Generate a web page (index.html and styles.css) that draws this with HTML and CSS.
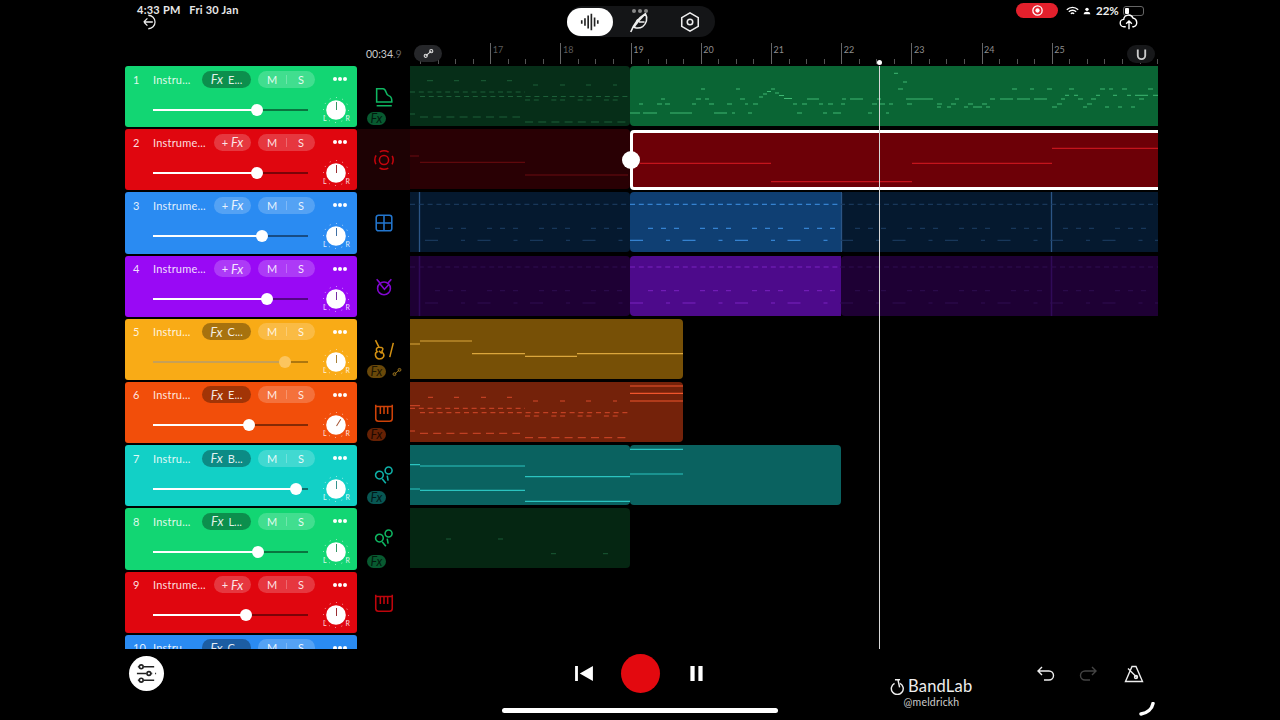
FILE: index.html
```html
<!DOCTYPE html>
<html lang="en">
<head>
<meta charset="utf-8">
<title>BandLab Studio</title>
<link rel="stylesheet" href="styles.css">
</head>
<body>
<svg class="defs" width="0" height="0" aria-hidden="true">
  <defs>
    <symbol id="knob" viewBox="0 0 32 32">
      <circle class="knob-dots" cx="16" cy="16" r="12.5"/>
      <circle class="knob-face" cx="16" cy="16" r="9.8"/>
      <text class="knob-lr" x="3" y="27">L</text>
      <text class="knob-lr" x="25.5" y="27">R</text>
    </symbol>
    <symbol id="maracas" viewBox="0 0 24 24">
      <circle cx="7" cy="11" r="4.2"/><circle cx="17" cy="6" r="3.8"/>
      <path d="M10 15l4 5M15.500 11.500l1 5.500"/>
    </symbol>
    <symbol id="keys" viewBox="0 0 24 24">
      <path d="M3 3v15q0 3 3 3h12q3 0 3-3V3M3 5h18M8 5v8M12 5v8M16 5v8"/>
    </symbol>
  </defs>
</svg>
<div class="app">
  <header class="top">
    <div class="top-left">
      <div class="clock">4:33 PM&nbsp;&nbsp; Fri 30 Jan</div>
      <svg class="back" viewBox="0 0 20 20"><path d="M7 2.500a7.500 7.500 0 1 1 0 15M2 10h10M2 10l4-4M2 10l4 4"/></svg>
    </div>
    <div class="seg">
      <div class="seg-on"><svg viewBox="0 0 24 24"><path d="M3 10v4M6.500 8v8M10 5v14M13.500 3v18M17 7v10M20.500 10v4"/></svg></div>
      <div class="seg-item">
        <span class="seg-dots"></span>
        <svg viewBox="0 0 24 24"><path d="M3 23C6 15 11 8 19 3c3 5 1 11-3 14-3 2-6 2-9 1M19 3C13 9 9 14 6 18M11 9c-2 2-3 5-3 8M18 12l-6 0"/></svg>
      </div>
      <div class="seg-item"><svg viewBox="0 0 24 24"><path d="M12 2l9 5.200v9.600L12 22l-9-5.200V7.200z"/><circle cx="12" cy="12" r="3"/></svg></div>
    </div>
    <div class="status">
      <span class="rec"><svg viewBox="0 0 14 14"><circle class="rec-ring" cx="7" cy="7" r="5"/><circle class="rec-dot" cx="7" cy="7" r="2.300"/></svg></span>
      <svg class="wifi" viewBox="0 0 16 12"><path d="M1 4.500c4-4 10-4 14 0M3.500 7c2.500-2.500 6.500-2.500 9 0M6 9.500c1-1 3-1 4 0"/></svg>
      <svg class="person" viewBox="0 0 12 12"><circle cx="6" cy="3.500" r="2.500"/><path d="M1 11c0-3 2-4 5-4s5 1 5 4z"/></svg>
      <span class="pct">22%</span>
      <span class="battery"><span class="battery-fill"></span></span>
      <svg class="cloud" viewBox="0 0 24 22"><path d="M8 18H6a4.500 4.500 0 0 1-.500-9 6 6 0 0 1 11.500-1.500A5.500 5.500 0 0 1 18 18h-2M12 21V11M8.500 14.500L12 11l3.500 3.500"/></svg>
    </div>
  </header>

  <div class="rulerbar">
    <div class="time">00:34<span class="time-dim">.9</span></div>
    <div class="ruler">
      <span class="bar bar-dim">17</span><span class="bar bar-dim">18</span><span class="bar">19</span><span class="bar">20</span><span class="bar">21</span><span class="bar">22</span><span class="bar">23</span><span class="bar">24</span><span class="bar">25</span>
      <span class="snap"><svg viewBox="0 0 14 14"><circle cx="3.500" cy="10" r="2"/><circle cx="10.500" cy="4" r="2"/><path d="M3.500 10L10.500 4"/></svg></span>
      <span class="magnet"><svg viewBox="0 0 14 14"><path d="M3 1.500V8a4 4 0 0 0 8 0V1.500"/></svg></span>
    </div>
  </div>

  <main class="workspace">
    <section class="mixer">
      <div class="strip c-green"><div class="strip-head"><span class="num">1</span><span class="name">Instru...</span><span class="fx"><i>Fx</i> E...</span><span class="ms"><b>M</b><b>S</b></span><span class="dots"></span></div><div class="strip-ctl"><div class="slider"><div class="fill" style="width:67%"></div></div><svg class="knob"><use href="#knob"/></svg></div></div>
      <div class="strip c-red"><div class="strip-head"><span class="num">2</span><span class="name">Instrume...</span><span class="fx fx-add">+ <i>Fx</i></span><span class="ms"><b>M</b><b>S</b></span><span class="dots"></span></div><div class="strip-ctl"><div class="slider"><div class="fill" style="width:67%"></div></div><svg class="knob"><use href="#knob"/></svg></div></div>
      <div class="strip c-blue"><div class="strip-head"><span class="num">3</span><span class="name">Instrume...</span><span class="fx fx-add">+ <i>Fx</i></span><span class="ms"><b>M</b><b>S</b></span><span class="dots"></span></div><div class="strip-ctl"><div class="slider"><div class="fill" style="width:70%"></div></div><svg class="knob"><use href="#knob"/></svg></div></div>
      <div class="strip c-purple"><div class="strip-head"><span class="num">4</span><span class="name">Instrume...</span><span class="fx fx-add">+ <i>Fx</i></span><span class="ms"><b>M</b><b>S</b></span><span class="dots"></span></div><div class="strip-ctl"><div class="slider"><div class="fill" style="width:73.5%"></div></div><svg class="knob"><use href="#knob"/></svg></div></div>
      <div class="strip c-yellow strip-muted"><div class="strip-head"><span class="num">5</span><span class="name">Instru...</span><span class="fx"><i>Fx</i> C...</span><span class="ms"><b>M</b><b>S</b></span><span class="dots"></span></div><div class="strip-ctl"><div class="slider"><div class="fill" style="width:85%"></div></div><svg class="knob"><use href="#knob"/></svg></div></div>
      <div class="strip c-orange strip-turned"><div class="strip-head"><span class="num">6</span><span class="name">Instru...</span><span class="fx"><i>Fx</i> E...</span><span class="ms"><b>M</b><b>S</b></span><span class="dots"></span></div><div class="strip-ctl"><div class="slider"><div class="fill" style="width:62%"></div></div><svg class="knob"><use href="#knob"/></svg></div></div>
      <div class="strip c-teal"><div class="strip-head"><span class="num">7</span><span class="name">Instru...</span><span class="fx"><i>Fx</i> B...</span><span class="ms"><b>M</b><b>S</b></span><span class="dots"></span></div><div class="strip-ctl"><div class="slider"><div class="fill" style="width:92%"></div></div><svg class="knob"><use href="#knob"/></svg></div></div>
      <div class="strip c-green"><div class="strip-head"><span class="num">8</span><span class="name">Instru...</span><span class="fx"><i>Fx</i> L...</span><span class="ms"><b>M</b><b>S</b></span><span class="dots"></span></div><div class="strip-ctl"><div class="slider"><div class="fill" style="width:67.7%"></div></div><svg class="knob"><use href="#knob"/></svg></div></div>
      <div class="strip c-red"><div class="strip-head"><span class="num">9</span><span class="name">Instrume...</span><span class="fx fx-add">+ <i>Fx</i></span><span class="ms"><b>M</b><b>S</b></span><span class="dots"></span></div><div class="strip-ctl"><div class="slider"><div class="fill" style="width:60%"></div></div><svg class="knob"><use href="#knob"/></svg></div></div>
      <div class="strip c-blue"><div class="strip-head"><span class="num">10</span><span class="name">Instru...</span><span class="fx"><i>Fx</i> C...</span><span class="ms"><b>M</b><b>S</b></span><span class="dots"></span></div></div>
    </section>

    <section class="instruments">
      <div class="inst c-green"><svg class="inst-icon" viewBox="0 0 24 24"><path d="M4 3h7c4 0 2 6 6 7.500 3 1 3.500 3 3.500 5.500v1.500H4zM4 21.500h16.500"/></svg><span class="badge"><i>Fx</i></span></div>
      <div class="inst c-red inst-selected"><svg class="inst-icon" viewBox="0 0 24 24"><circle cx="12" cy="12" r="5"/><circle cx="12" cy="12" r="10" stroke-dasharray="10 5.700" stroke-dashoffset="5"/></svg></div>
      <div class="inst c-blue"><svg class="inst-icon" viewBox="0 0 24 24"><rect x="3.500" y="3.500" width="17" height="17" rx="2.500"/><path d="M12 3.500v17M3.500 12h17"/></svg></div>
      <div class="inst c-purple"><svg class="inst-icon" viewBox="0 0 24 24"><circle cx="12" cy="13.500" r="7"/><path d="M4 3.500l3.500 4M20 3.500l-3.500 4M7.500 8.500l5 6 4.500-5"/></svg></div>
      <div class="inst c-yellow"><svg class="inst-icon inst-wide" viewBox="0 0 28 24"><path d="M5 1l4 8c-3 0-4 3-2 5-3 1-3 7 2 8 5 0 7-4 4-7-1-1-1-2 0-3 1-2 0-3-4-3M9 13l3 3M25 4l-4 16"/></svg><span class="badge"><i>Fx</i></span><svg class="scissor" viewBox="0 0 14 14"><circle cx="3.500" cy="10" r="2"/><circle cx="10.500" cy="4" r="2"/><path d="M3.500 10L10.500 4"/></svg></div>
      <div class="inst c-orange"><svg class="inst-icon"><use href="#keys"/></svg><span class="badge"><i>Fx</i></span></div>
      <div class="inst c-teal"><svg class="inst-icon"><use href="#maracas"/></svg><span class="badge"><i>Fx</i></span></div>
      <div class="inst c-green"><svg class="inst-icon"><use href="#maracas"/></svg><span class="badge"><i>Fx</i></span></div>
      <div class="inst c-red"><svg class="inst-icon"><use href="#keys"/></svg></div>
    </section>

    <section class="timeline">
      <div class="lane">
        <div class="clip clip-220 g-dark"></div><div class="clip clip-fill g-bright"></div>
        <svg class="notes" viewBox="0 0 748 61">
          <g class="n-green-dim">
            <path d="M17 14.700h6M44 14.700h5M71 14.700h5M97 14.700h5M123 19h5M150 19h5M176 19h5M203 19h4M0 48h5"/>
            <path class="d-a" d="M0 26h115"/><path class="d-a" d="M10 30.500h208"/><path class="d-b" d="M115 34h103"/>
            <path class="d-c" d="M10 51h100"/><path class="d-c" d="M115 56h102"/>
          </g>
          <g class="n-green">
            <path d="M220 47h10M233 47h14M260 47h22M304 47h13M322 47h3M338 47h4M387 47h5M413 47h4M423 47h8M458 47h4M476 47h3"/>
            <path d="M229 38h4M247 38h5M255 38h5M282 38h4M299 38h5M317 38h5M335 38h3M343 38h5M383 38h4M392 38h5M409 38h4M418 38h5M431 38h4M462 38h5M470 38h5M479 38h4"/>
            <path d="M251 33h4M286 33h5M295 33h4M330 33h5M397 33h12M432 33h4M440 33h13M467 33h4M496 33h27M545 33h4M580 33h5M590 33h13M607 33h13M624 33h13M651 33h4M668 33h5M681 33h5M729 33h5"/>
            <path d="M291 23h4M326 23h4M361 23h4M488 23h5M602 23h5M620 23h4M637 23h5M659 23h5M690 23h5M699 23h4M712 23h5M738 23h5"/>
            <path d="M349 31h4M353 28h4M357 25.500h4M365 27h4M369 29.500h5M374 32.500h8M484 7.300h4M493 16h4"/>
            <path d="M655 29.300h4M664 29.300h4M686 29.300h4M703 29.300h4M717 29.300h4M725 29.300h13M743 29.300h5"/>
            <path d="M497 38h5M541 38h5M558 38h5M572 38h5M647 38h5M677 38h5M527 38h5"/>
            <path d="M527 41h4M537 41h4M554 41h4M563 41h9M576 41h4M642 41h5M673 41h4M695 41h4M708 41h4M721 41h4"/>
          </g>
        </svg>
      </div>

      <div class="lane">
        <div class="clip clip-220 r-dark"></div><div class="clip clip-fill r-bright clip-selected"><span class="handle"></span></div>
        <svg class="notes" viewBox="0 0 748 61">
          <g class="n-red-dim"><path d="M0 27h9M10 33.300h105M115 46h103"/></g>
          <g class="n-red"><path d="M230 34.300h131M361 52.700h141M502 34.300h140M642 19.300h106"/></g>
        </svg>
      </div>

      <div class="lane">
        <div class="clip clip-220 b-dark"></div><div class="clip clip-211 b-bright"></div><div class="clip clip-fill b-dark clip-flat"></div>
        <svg class="notes" viewBox="0 0 748 61">
          <path class="n-blue-line" d="M9.500 0v60M431.500 0v60M641.500 0v60"/>
          <g class="n-blue-dim"><path class="d-a" d="M0 12.300h220M430 12.300h318"/><path class="d-g" d="M25 36.300h195M445 36.300h303"/><path class="d-h" d="M15 48.300h205M430 48.300h318"/></g>
          <g class="n-blue"><path class="d-a" d="M220 12.300h208"/><path class="d-g" d="M238 36.300h193"/><path class="d-h" d="M220 48.300h200"/></g>
        </svg>
      </div>

      <div class="lane">
        <div class="clip clip-220 p-dark"></div><div class="clip clip-211 p-bright"></div><div class="clip clip-fill p-dark clip-flat"></div>
        <svg class="notes" viewBox="0 0 748 61">
          <path class="n-purple-line" d="M9.500 0v60M641.500 0v60"/>
          <g class="n-purple-dim"><path class="d-a" d="M0 11h220M430 11h318"/><path class="d-g" d="M25 34.700h195M445 34.700h303"/><path class="d-h" d="M15 47h205M430 47h318"/></g>
          <g class="n-purple"><path class="d-a" d="M220 11h208"/><path class="d-g" d="M238 34.700h193"/><path class="d-h" d="M220 47h200"/></g>
        </svg>
      </div>

      <div class="lane">
        <div class="clip clip-273 y-bright"></div>
        <svg class="notes" viewBox="0 0 748 61"><g class="n-yellow"><path d="M0 25h10M10 22h52M62 34.700h53M115 37.300h52M167 34.700h106"/></g></svg>
      </div>

      <div class="lane">
        <div class="clip clip-273 o-bright"></div>
        <svg class="notes" viewBox="0 0 748 61">
          <g class="n-orange">
            <path d="M18 15.300h5M44 15.300h5M71 15.300h5M97 15.300h5M123 19h5M150 19h5M176 19h5M203 19h4M0 23.700h10M0 49h5"/>
            <path class="d-a" d="M0 26.300h115"/><path class="d-a" d="M10 30.700h208"/><path class="d-b" d="M115 34h103"/>
            <path class="d-c" d="M10 51.300h100"/><path class="d-c" d="M115 55.700h102"/>
          </g>
          <g class="n-orange-hi"><path d="M220 4h53M220 11.300h53M220 19h53"/></g>
        </svg>
      </div>

      <div class="lane">
        <div class="clip clip-220 t-bright"></div><div class="clip clip-211 t-next"></div>
        <svg class="notes" viewBox="0 0 748 61"><g class="n-teal"><path d="M0 19.700h10M10 21h105M115 31.700h105M0 44h10M10 45.300h105M115 56.300h105M220 4.300h53M220 29h53"/></g></svg>
      </div>

      <div class="lane">
        <div class="clip clip-220 g-deep"></div>
        <svg class="notes" viewBox="0 0 748 61"><g class="n-green-faint"><path d="M36 31h5M88 31h5M141 45.700h5M193 45.700h5"/></g></svg>
      </div>

      <span class="playhead"></span>
    </section>
  </main>

  <footer class="bottom">
    <button class="mix-btn" type="button"><svg viewBox="0 0 24 24"><path d="M9 5h11M2 12h10M17 12h1M21 12h1M9 19h11M3 5h1M3 19h1"/><circle cx="6.500" cy="5" r="2"/><circle cx="14.500" cy="12" r="2"/><circle cx="6.500" cy="19" r="2"/></svg></button>
    <div class="transport">
      <svg class="prev" viewBox="0 0 19 16"><path d="M0 0h3v16H0zM19 0v16L5 8z"/></svg>
      <span class="record"></span>
      <svg class="pause" viewBox="0 0 13 16"><path d="M0 0h4.500v16H0zM8.500 0H13v16H8.500z"/></svg>
    </div>
    <div class="brand">
      <div class="brand-name"><svg viewBox="0 0 20 20"><path d="M7 2h6M10.500 2l2 9M13 6.200a7 7 0 1 1-6.500 0"/></svg>BandLab</div>
      <div class="brand-user">@meldrickh</div>
    </div>
    <div class="tools">
      <svg class="tool" viewBox="0 0 20 20"><path d="M6 3L2 7l4 4M2 7h11a4.500 4.500 0 0 1 0 9H8"/></svg>
      <svg class="tool tool-off" viewBox="0 0 20 20"><path d="M14 3l4 4-4 4M18 7H7a4.500 4.500 0 0 0 0 9h5"/></svg>
      <svg class="tool tool-metro" viewBox="0 0 20 20"><path d="M8 2.500h4l6.500 15h-17zM4 4.500l9 9"/><circle cx="12" cy="13" r="1.500"/></svg>
    </div>
    <span class="home"></span>
    <svg class="corner" viewBox="0 0 16 14"><path d="M14 1.500C13 7 8 11 2 12"/></svg>
  </footer>
</div>
</body>
</html>
```

FILE: styles.css
```css
* { box-sizing: border-box; }
html, body { margin: 0; padding: 0; background: #000; }
body { width: 1280px; height: 720px; overflow: hidden; font-family: "Lato", "Liberation Sans", sans-serif; color: #fff; }
svg { display: block; }
.defs { height: 0; }
.app { width: 1280px; height: 720px; display: flex; flex-direction: column; }

/* top */
.top { height: 44px; display: flex; padding-left: 137px; }
.top-left { width: 403px; padding-top: 4px; }
.clock { font-size: 11px; line-height: 12px; font-weight: 700; color: #e8e8e8; letter-spacing: .25px; }
.back { width: 18px; height: 18px; margin: -3px 0 0 5px; fill: none; stroke: #eee; stroke-width: 1.4; }
.seg { width: 148px; height: 31px; margin: 6px 0 0 27px; background: #141517; border-radius: 16px; display: flex; align-items: center; }
.seg-on { width: 46px; height: 28px; background: #fff; border-radius: 14px; display: flex; align-items: center; justify-content: center; }
.seg-on svg { width: 22px; height: 22px; fill: none; stroke: #222; stroke-width: 1.8; }
.seg-item { flex: 1; display: flex; justify-content: center; position: relative; }
.seg-item svg { width: 22px; height: 22px; fill: none; stroke: #eee; stroke-width: 1.7; }
.seg-dots { position: absolute; top: -2px; left: 19px; width: 4px; height: 4px; border-radius: 50%; background: #888; box-shadow: 6px 0 #888, 12px 0 #888; }
.status { display: flex; align-items: flex-start; margin-left: 301px; padding-top: 3px; position: relative; }
.rec { width: 42px; height: 15px; background: #e3202c; border-radius: 8px; display: flex; align-items: center; justify-content: center; }
.rec svg { width: 13px; height: 13px; }
.rec-ring { fill: none; stroke: #fff; stroke-width: 1.4; }
.rec-dot { fill: #fff; }
.wifi { width: 13px; height: 10px; margin: 3px 0 0 8px; fill: none; stroke: #fff; stroke-width: 1.7; }
.person { width: 8px; height: 8px; margin: 4px 0 0 4px; fill: #fff; }
.pct { font-size: 11.5px; line-height: 15px; margin-left: 5px; font-weight: 700; color: #eee; }
.battery { width: 21px; height: 10px; margin: 3px 0 0 4px; border: 1px solid #666; border-radius: 3px; padding: 1px; display: block; }
.battery-fill { display: block; width: 4px; height: 6px; background: #fff; border-radius: 1px; }
.cloud { position: absolute; left: 103px; top: 12px; width: 20px; height: 18px; fill: none; stroke: #fff; stroke-width: 1.7; }

/* ruler */
.rulerbar { height: 22px; display: flex; padding-left: 366px; }
.time { width: 44px; font-size: 10.5px; line-height: 20px; color: #ccc; }
.time-dim { color: #666; }
.ruler { width: 748px; height: 21px; margin-top: -1px; display: flex; padding-left: 80.3px; position: relative; background: repeating-linear-gradient(90deg, #555 0 1px, transparent 1px 17.55px) 10.1px 100% / 100% 5px no-repeat; }
.bar { width: 70.2px; flex: none; border-left: 1px solid #666; font-size: 9px; line-height: 10px; padding: 2px 0 0 1.5px; color: #8e8e8e; }
.bar-dim { color: #5c5c5c; }
.snap { position: absolute; left: 4px; top: 2px; width: 28px; height: 17px; background: #26272a; border-radius: 9px; display: flex; align-items: center; justify-content: center; }
.snap svg { width: 11px; height: 11px; fill: none; stroke: #ddd; stroke-width: 1.4; }
.magnet { position: absolute; right: 3px; top: 2px; width: 28px; height: 18px; background: #17181a; border-radius: 9px; display: flex; align-items: center; justify-content: center; }
.magnet svg { width: 13px; height: 13px; fill: none; stroke: #ccc; stroke-width: 2; }

/* workspace */
.workspace { height: 583px; display: flex; padding-left: 125px; }
.mixer, .instruments { height: 583px; overflow: hidden; flex: none; display: flex; flex-direction: column; gap: 2px; }
.mixer { width: 232px; }
.instruments { width: 53px; }
.strip { height: 61.2px; flex: none; border-radius: 3px; background: var(--c); position: relative; }
.c-green { --c: #12d673; }
.c-red { --c: #e0060f; }
.c-blue { --c: #2a8bf2; }
.c-purple { --c: #9909f5; }
.c-yellow { --c: #f9ab16; }
.c-orange { --c: #f24e0a; }
.c-teal { --c: #12d0c6; }
.strip-head { height: 26px; display: flex; align-items: center; padding: 0 10px 0 8px; font-size: 11px; color: rgba(255,255,255,.88); }
.num { width: 20px; flex: none; }
.name { width: 49px; flex: none; white-space: nowrap; letter-spacing: .2px; }
.fx { width: 49px; height: 17px; flex: none; border-radius: 9px; background: rgba(0,0,0,.33); display: flex; align-items: center; justify-content: center; gap: 5px; white-space: nowrap; }
.fx i { font-size: 13px; }
.strip-head .fx-add { width: 37px; margin-left: 12px; background: rgba(255,255,255,.2); gap: 3px; }
.ms { width: 57px; height: 17px; margin-left: 7px; flex: none; border-radius: 9px; background: rgba(255,255,255,.2); display: flex; align-items: center; }
.ms b { flex: 1; text-align: center; font-weight: 400; font-size: 11px; }
.ms b + b { border-left: 1px solid rgba(255,255,255,.25); line-height: 9px; }
.dots { width: 4px; height: 4px; margin: 0 10px 0 18px; flex: none; border-radius: 50%; background: #fff; box-shadow: 5px 0 #fff, 10px 0 #fff; }
.strip-ctl { height: 35px; display: flex; align-items: center; padding-left: 28px; }
.slider { width: 155px; height: 2px; background: rgba(0,0,0,.45); flex: none; }
.fill { height: 2px; background: #fff; position: relative; }
.fill::after { content: ""; position: absolute; right: -6px; top: -5px; width: 12px; height: 12px; border-radius: 50%; background: #fff; }
.strip-muted .slider { background: rgba(0,0,0,.3); }
.strip-muted .fill { background: rgba(255,255,255,.3); }
.strip-muted .fill::after { background: #fcc55e; }
.knob { width: 32px; height: 32px; margin-left: 12px; flex: none; overflow: visible; }
.knob-dots { fill: none; stroke: rgba(255,255,255,.65); stroke-width: 1; stroke-dasharray: 1 5.5; }
.knob-face { fill: #fff; }
.knob-lr { font-size: 7px; fill: rgba(255,255,255,.85); }
.strip-ctl::after { content: ""; position: absolute; right: 20.5px; top: 36px; width: 1px; height: 8px; background: color-mix(in srgb, var(--c) 50%, #555); transform-origin: 50% 100%; }
.strip-turned .strip-ctl::after { transform: rotate(32deg); }

/* instruments */
.inst { height: 61.2px; flex: none; color: var(--c); display: flex; flex-direction: column; align-items: center; position: relative; padding-top: 20px; }
.inst-selected { background: #1d0204; }
.inst-icon { width: 22px; height: 22px; fill: none; stroke: currentColor; stroke-width: 1.7; opacity: .85; }
.inst-wide { width: 25px; }
.badge { position: absolute; left: 10px; bottom: 2px; width: 19px; height: 13px; border-radius: 7px; background: color-mix(in srgb, var(--c) 42%, #000); color: color-mix(in srgb, var(--c) 12%, #000); display: flex; align-items: center; justify-content: center; font-size: 12.5px; }
.scissor { position: absolute; left: 35px; bottom: 3px; width: 10px; height: 10px; fill: none; stroke: #a67c20; stroke-width: 1.3; }

/* timeline */
.timeline { width: 748px; height: 583px; display: flex; flex-direction: column; gap: 2px; flex: none; position: relative; }
.lane { height: 61.2px; flex: none; display: flex; position: relative; }
.clip { height: 60px; border-radius: 0 4px 4px 0; flex: none; }
.clip-flat { border-radius: 0; }
.clip-220 { width: 220px; }
.clip-211 { width: 211px; border-radius: 4px 0 0 4px; }
.clip-273 { width: 273px; }
.clip-fill { flex: 1; border-radius: 4px 0 0 4px; position: relative; }
.g-dark { background: #062e18; }
.g-bright { background: #0a6534; }
.g-deep { background: #052612; }
.r-dark { background: #290004; }
.r-bright { background: #6d0007; }
.clip-selected { margin-top: 1px; height: 59.5px; border: 3px solid #fff; border-right: 0; }
.handle { position: absolute; left: -11px; top: 18px; width: 18px; height: 18px; border-radius: 50%; background: #fff; }
.b-dark { background: #05192f; }
.b-bright { background: #0f3f73; }
.p-dark { background: #1e0034; }
.p-bright { background: #4d0a8b; border-radius: 4px 0 0 4px; }
.y-bright { background: #775006; }
.o-bright { background: #74220a; }
.t-bright { background: #0a6260; }
.t-next { background: #0a6260; border-radius: 4px; }
.notes { position: absolute; left: 0; top: 0; width: 748px; height: 61px; fill: none; stroke-width: 1; pointer-events: none; }
.d-a { stroke-dasharray: 5 3.8; }
.d-b { stroke-dasharray: 5 3.8 5 12.5; }
.d-c { stroke-dasharray: 8 5.2; }
.d-g { stroke-dasharray: 5 8 5 8 5 21; }
.d-h { stroke-dasharray: 13 23 4 12.5; }
.n-green { stroke: #3fb873; }
.n-green-dim { stroke: #1c5f38; }
.n-green-faint { stroke: #1b5a36; }
.n-red { stroke: #c4141c; stroke-width: 1.2; }
.n-red-dim { stroke: #6d0a10; }
.n-blue { stroke: #3f94e8; }
.n-blue-dim { stroke: #1d3f66; }
.n-blue-line { stroke: #2c5585; stroke-width: 1.3; }
.n-purple { stroke: #7a22c0; }
.n-purple-dim { stroke: #2e0d50; }
.n-purple-line { stroke: #300a58; stroke-width: 1.5; }
.n-yellow { stroke: #dca63c; stroke-width: 1.2; }
.n-orange { stroke: #d5492a; }
.n-orange-hi { stroke: #f0552c; stroke-width: 1.2; }
.n-teal { stroke: #2bc4c0; stroke-width: 1.2; }
.playhead { position: absolute; left: 469px; top: 0; bottom: 0; width: 1px; background: #d8d8d8; }
.playhead::before { content: ""; position: absolute; left: -2px; top: -6px; width: 5px; height: 5px; border-radius: 50%; background: #fff; }

/* bottom */
.bottom { flex: 1; position: relative; display: flex; align-items: flex-start; padding: 7px 0 0 129px; }
.mix-btn { width: 35px; height: 35px; border-radius: 50%; border: 0; background: #fff; padding: 6px; flex: none; }
.mix-btn svg { width: 23px; height: 23px; fill: none; stroke: #222; stroke-width: 1.7; }
.transport { width: 128px; margin: -2px 0 0 411px; height: 39px; display: flex; align-items: center; flex: none; }
.prev { width: 18px; height: 15px; fill: #fff; }
.record { width: 39px; height: 39px; margin: 0 30px 0 28px; border-radius: 50%; background: #e3090f; }
.pause { width: 13px; height: 15px; fill: #fff; }
.brand { width: 83px; margin: 22px 0 0 187px; flex: none; text-align: center; }
.brand-name { display: flex; align-items: center; gap: 2px; font-size: 16.5px; line-height: 17px; color: #eee; letter-spacing: .2px; margin-left: -1px; white-space: nowrap; }
.brand-name svg { width: 17px; height: 17px; fill: none; stroke: #eee; stroke-width: 1.7; flex: none; }
.brand-user { font-size: 10.5px; line-height: 12px; color: #ccc; letter-spacing: .2px; margin-top: 1px; }
.tools { display: flex; gap: 22px; margin: 8px 0 0 63px; flex: none; }
.tool { width: 20px; height: 20px; fill: none; stroke: #eee; stroke-width: 1.4; }
.tool-off { stroke: #444; }
.tool-metro { margin-left: 4px; }
.home { position: absolute; left: 502px; top: 59px; width: 276px; height: 5px; border-radius: 3px; background: #fff; }
.corner { position: absolute; left: 1139px; top: 53px; width: 16px; height: 14px; fill: none; stroke: #fff; stroke-width: 3.5; stroke-linecap: round; }
```
